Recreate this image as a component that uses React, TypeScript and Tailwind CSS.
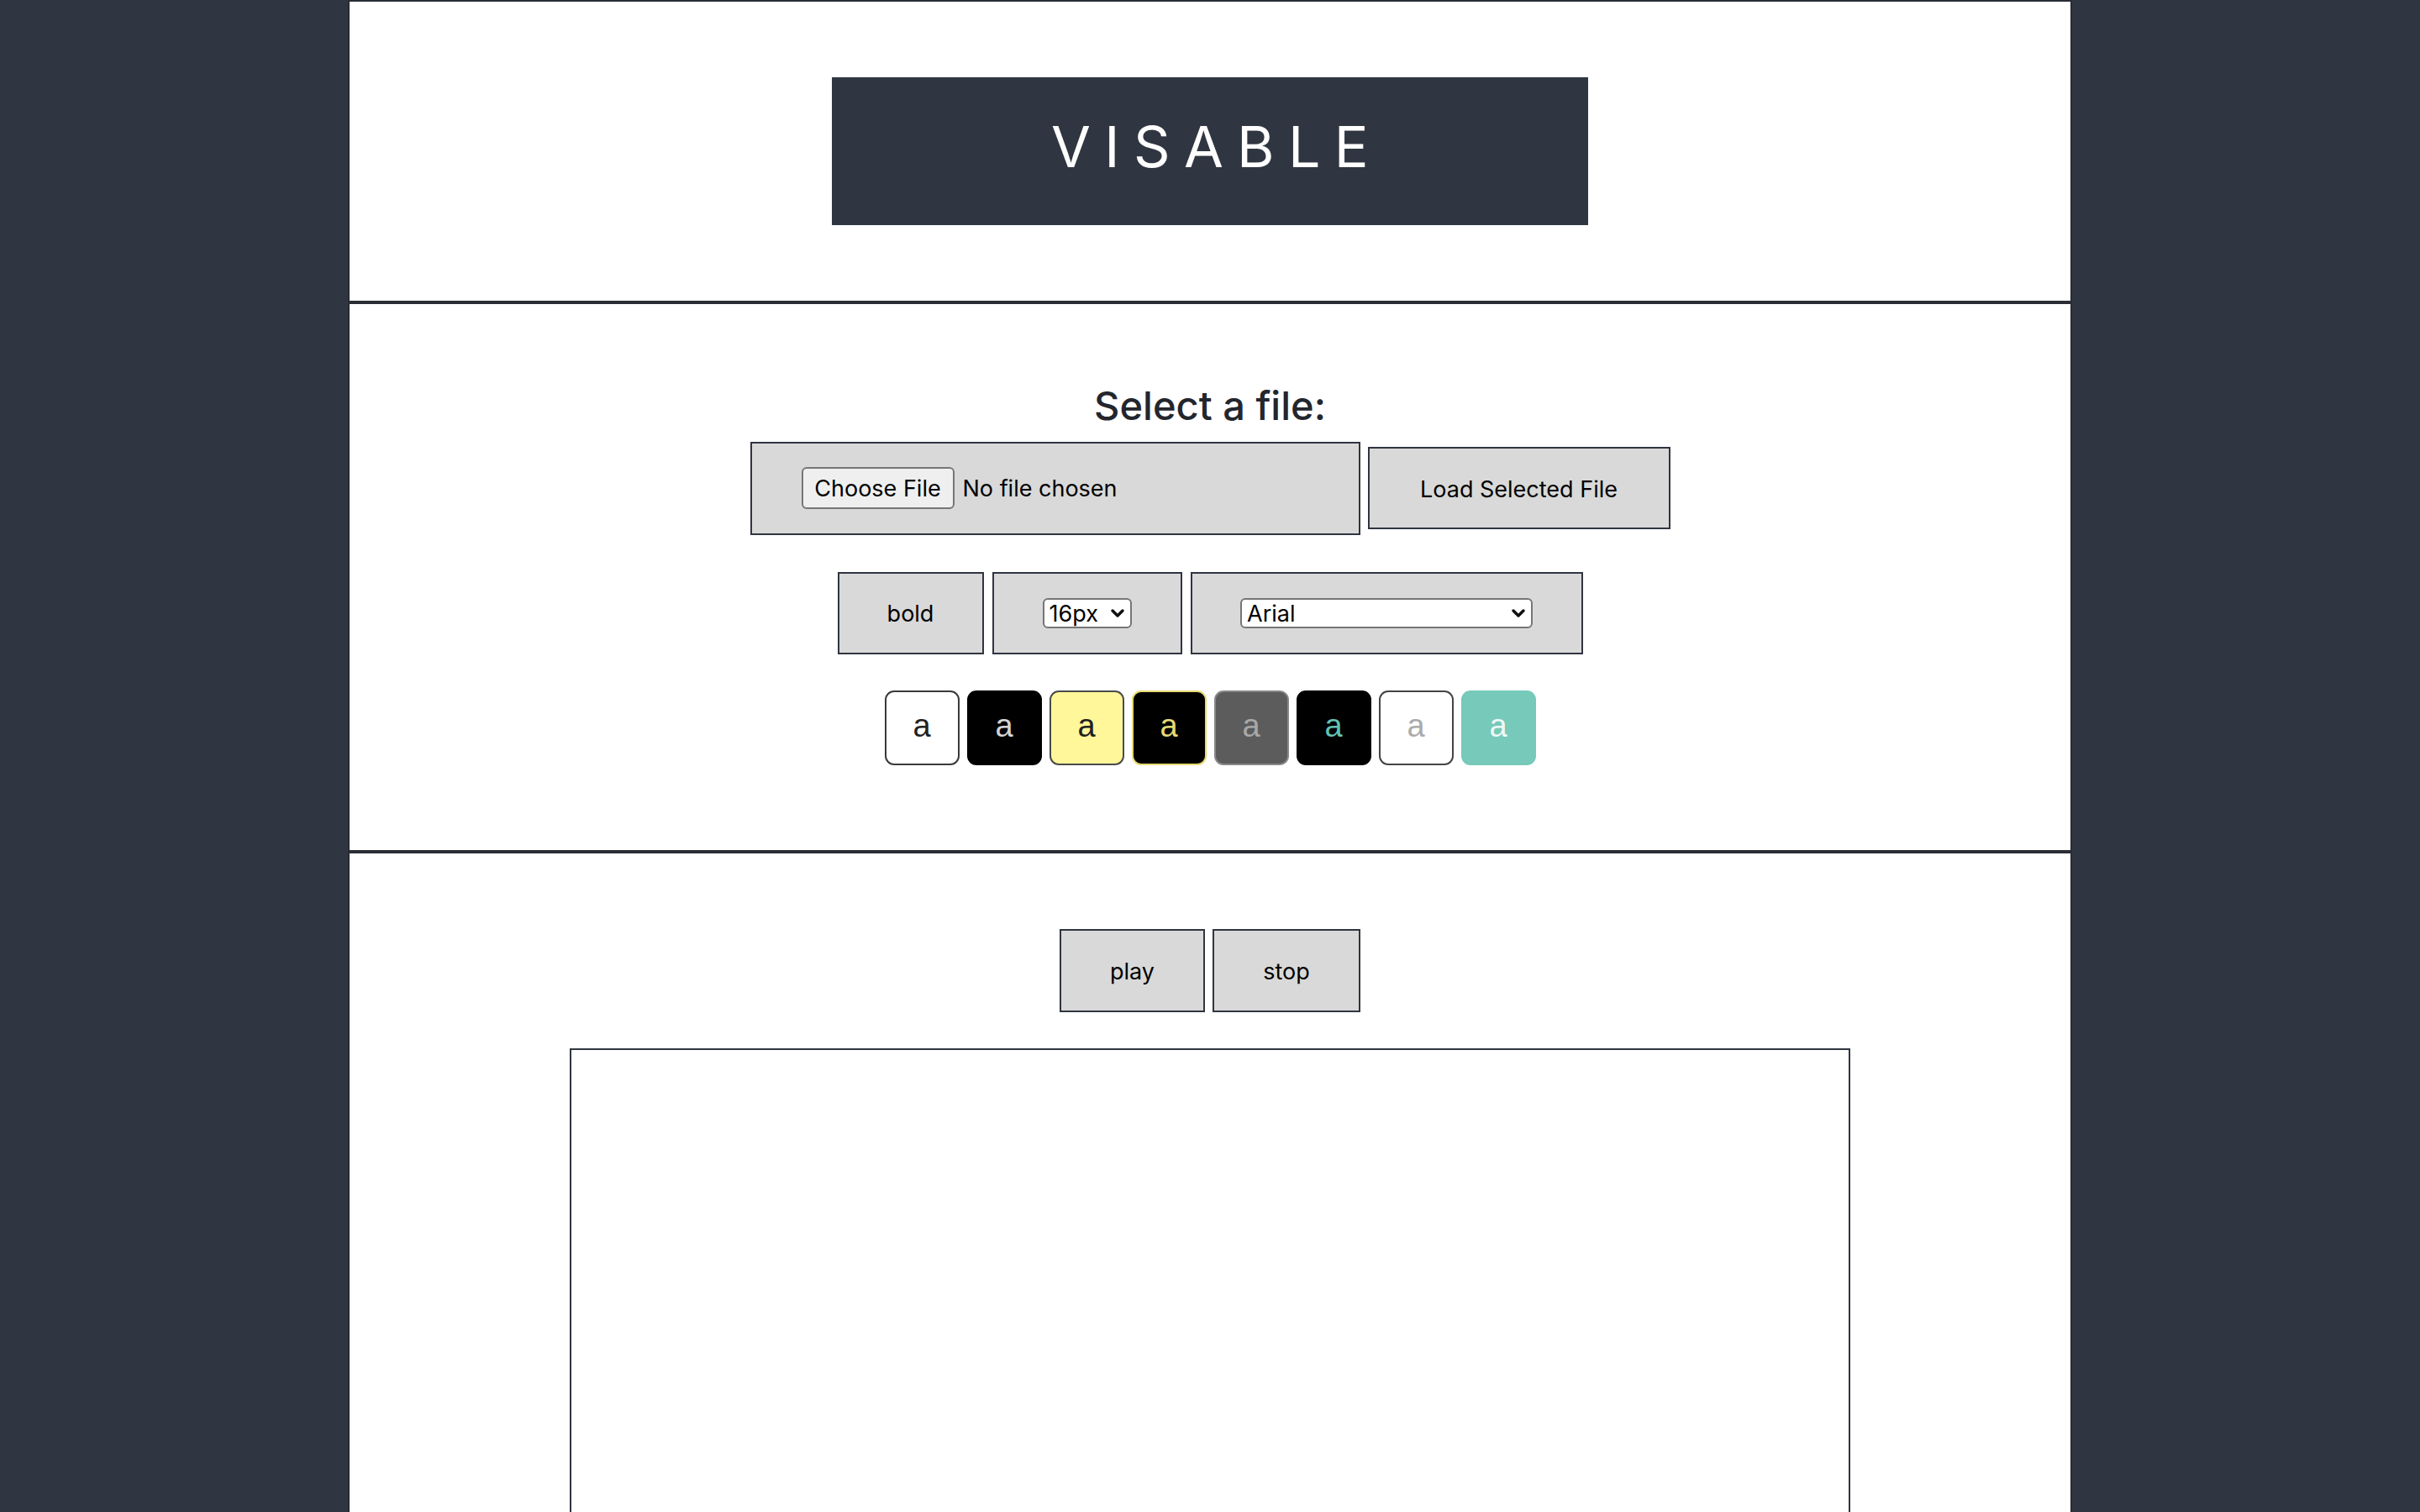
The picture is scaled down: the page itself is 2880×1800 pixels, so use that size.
import React from "react";

const swatches = [
  { cls: "bg-white border-[#3a3a3a] text-[#222222]" },
  { cls: "bg-black border-black text-[#d4d4d4]" },
  { cls: "bg-[#fff799] border-[#4a4a4a] text-[#222222]" },
  { cls: "bg-black border-[#e6da72] text-[#e6da72]" },
  { cls: "bg-[#5c5c5c] border-[#888888] text-[#a8a8a8]" },
  { cls: "bg-black border-black text-[#62c1b2]" },
  { cls: "bg-white border-[#444444] text-[#ababab]" },
  { cls: "bg-[#77c9b9] border-[#77c9b9] text-[#eef8f6]" },
];

function Chevron() {
  return (
    <svg
      width="18"
      height="12"
      viewBox="0 0 18 12"
      className="pointer-events-none absolute right-[8px] top-1/2 -translate-y-1/2"
    >
      <path d="M3 3l6 6 6-6" fill="none" stroke="#111" strokeWidth="3.5" strokeLinecap="round" strokeLinejoin="round" />
    </svg>
  );
}

function FakeSelect({ value, options, width }: { value: string; options: string[]; width: string }) {
  return (
    <div className={`relative ${width}`}>
      <select
        defaultValue={value}
        className="h-[36px] w-full appearance-none rounded-[6px] border-2 border-[#767676] bg-white pl-[6px] pr-[30px] pt-[2px] text-[27px] leading-[30px] text-black outline-none"
        style={{ fontFamily: "Inter, 'Noto Sans', sans-serif" }}
      >
        {options.map((o) => (
          <option key={o} value={o}>
            {o}
          </option>
        ))}
      </select>
      <Chevron />
    </div>
  );
}

export default function App() {
  return (
    <div className="min-h-screen bg-[#303641]" style={{ fontFamily: "Inter, 'Noto Sans', sans-serif" }}>
      <div className="mx-auto w-[2052px] border-x-2 border-t-2 border-[#282c34] bg-white">
        {/* Header */}
        <section className="flex justify-center border-b-4 border-[#2a2d35] py-[90px]">
          <div className="flex h-[176px] w-[900px] items-center justify-center bg-[#303641]">
            <h1 className="mb-[12px] pl-[16px] text-[68px] font-normal leading-none tracking-[0.24em] text-white">
              VISABLE
            </h1>
          </div>
        </section>

        {/* File selection */}
        <section className="flex flex-col items-center border-b-4 border-[#2a2d35] pb-[101px] pt-[92px]">
          <h2 className="text-[47px] font-medium leading-[57.6px] text-[#23262d]">Select a file:</h2>

          <div className="mt-[14px] flex items-center gap-[9px]">
            <div className="flex h-[111px] w-[726px] items-center border-2 border-[#2f3540] bg-[#d9d9d9] px-[59px]">
              <button className="flex h-[50px] w-[182px] items-center justify-center rounded-[6px] border-2 border-[#767676] bg-[#efefef] pt-[3px] text-[27px] text-black">
                Choose File
              </button>
              <span className="ml-[10px] pt-[3px] text-[27px] text-black">No file chosen</span>
            </div>
            <button className="h-[98px] w-[360px] border-2 border-[#2f3540] bg-[#d9d9d9] pt-[4px] text-[27px] text-black">
              Load Selected File
            </button>
          </div>

          <div className="mt-[44px] flex items-center gap-[10px]">
            <button className="h-[98px] w-[174px] border-2 border-[#2f3540] bg-[#d9d9d9] pt-[4px] text-[27px] text-black">
              bold
            </button>
            <div className="flex h-[98px] w-[226px] items-center justify-center border-2 border-[#2f3540] bg-[#d9d9d9]">
              <FakeSelect value="16px" options={["12px", "14px", "16px", "18px", "20px", "24px"]} width="w-[106px]" />
            </div>
            <div className="flex h-[98px] w-[467px] items-center justify-center border-2 border-[#2f3540] bg-[#d9d9d9]">
              <FakeSelect
                value="Arial"
                options={["Arial", "Verdana", "Helvetica", "Times New Roman", "Georgia"]}
                width="w-[348px]"
              />
            </div>
          </div>

          <div className="mt-[43px] flex items-center gap-[9px]">
            {swatches.map((s, i) => (
              <button
                key={i}
                className={`flex h-[89px] w-[89px] items-center justify-center rounded-[11px] border-2 pb-[4px] text-[38px] leading-none ${s.cls}`}
                style={{ fontFamily: "'Liberation Sans', Arial, sans-serif" }}
              >
                a
              </button>
            ))}
          </div>
        </section>

        {/* Player */}
        <section className="flex flex-col items-center pb-[90px] pt-[90px]">
          <div className="flex items-center gap-[9px]">
            <button className="h-[99px] w-[173px] border-2 border-[#2f3540] bg-[#d9d9d9] pt-[4px] text-[27px] text-black">
              play
            </button>
            <button className="h-[99px] w-[176px] border-2 border-[#2f3540] bg-[#d9d9d9] pt-[4px] text-[27px] text-black">
              stop
            </button>
          </div>
          <div className="mt-[43px] h-[900px] w-[1524px] border-2 border-[#2f3540] bg-white" />
        </section>
      </div>
    </div>
  );
}
